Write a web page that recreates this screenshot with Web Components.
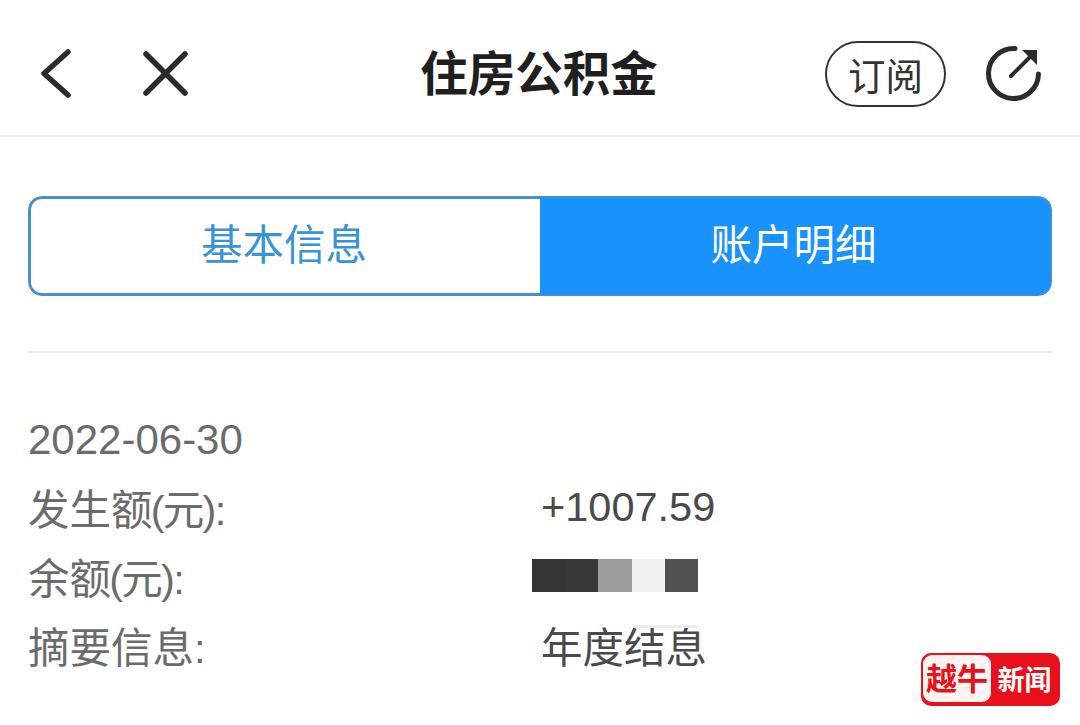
<!DOCTYPE html>
<html lang="zh">
<head>
<meta charset="utf-8">
<title>住房公积金</title>
<style>
  html, body { margin: 0; background: #fff; }
  body { width: 1080px; height: 725px; overflow: hidden; font-family: "Liberation Sans", "Noto Sans CJK SC", sans-serif; }
</style>
</head>
<body>
<app-header title="住房公积金"></app-header>
<tab-switch></tab-switch>
<detail-list>
  <div slot="date">2022-06-30</div>
  <detail-row label="发生额(元):">+1007.59</detail-row>
  <detail-row label="余额(元):"><mosaic-block></mosaic-block></detail-row>
  <detail-row label="摘要信息:" smudge>年度结息</detail-row>
</detail-list>
<news-badge></news-badge>

<script>
class AppHeader extends HTMLElement {
  constructor() {
    super();
    this.root = this.attachShadow({ mode: "open" });
    this.root.innerHTML = `
      <style>
        :host { display: block; height: 135px; border-bottom: 2px solid #f1f1f1; }
        .bar { display: grid; grid-template-columns: 1fr auto 1fr; align-items: center; height: 100%; padding: 12px 37px 0 40px; box-sizing: border-box; }
        .left, .right { display: flex; align-items: center; }
        .right { justify-content: flex-end; gap: 39px; }
        .left { gap: 69px; }
        h1 { margin: 2px 5px 0 0; font-size: 47.500px; font-weight: 700; color: #1f1f1f; line-height: 1; white-space: nowrap; }
        .pill { width: 121px; height: 66px; box-sizing: border-box; border: 2.500px solid #333; border-radius: 33px; font-size: 37.500px; color: #333; display: flex; align-items: center; justify-content: center; }
        svg { display: block; }
      </style>
      <div class="bar">
        <div class="left">
          <svg width="34" height="50" viewBox="0 0 34 50"><path d="M28 3 L4 24.500 L28 46" fill="none" stroke="#2b2b2d" stroke-width="5.500" stroke-linecap="round" stroke-linejoin="round"/></svg>
          <svg width="45" height="45" viewBox="0 0 45 45"><path d="M3 3 L42 42 M42 3 L3 42" fill="none" stroke="#2b2b2d" stroke-width="5.500" stroke-linecap="round"/></svg>
        </div>
        <h1>${this.getAttribute("title")}</h1>
        <div class="right">
          <div class="pill">订阅</div>
          <svg width="58" height="58" viewBox="0 0 58 58" fill="none" stroke="#2b2b2d"><path d="M30 3.500 A25 25 0 1 0 53.500 29" stroke-width="5" stroke-linecap="round"/><path d="M26 31 L47 10" stroke-width="4" stroke-linecap="round"/><path d="M37 5 H52 V20 Z" fill="#2b2b2d" stroke="none"/></svg>
        </div>
      </div>`;
  }
}

class TabSwitch extends HTMLElement {
  constructor() {
    super();
    this.root = this.attachShadow({ mode: "open" });
    this.root.innerHTML = `
      <style>
        :host { display: block; margin: 59px 28px 0; height: 100px; }
        .tabs { display: grid; grid-template-columns: 1fr 1fr; height: 100%; border-radius: 14px; overflow: hidden; }
        .tab { display: flex; align-items: center; justify-content: center; font-size: 41.500px; padding: 0 3px 8px 0; box-sizing: border-box; }
        .plain { color: #3a93d4; border: 3px solid #4a90c6; border-right: 0; border-radius: 14px 0 0 14px; }
        .active { background: #1a92fb; color: #fff; border: solid #3a90d6; border-width: 2px 2px 2px 0; border-radius: 0 14px 14px 0; }
      </style>
      <div class="tabs">
        <div class="tab plain">基本信息</div>
        <div class="tab active">账户明细</div>
      </div>`;
  }
}

class DetailList extends HTMLElement {
  constructor() {
    super();
    this.root = this.attachShadow({ mode: "open" });
    this.root.innerHTML = `
      <style>
        :host { display: block; margin: 55px 28px 0; border-top: 2px solid #ededed; padding-top: 52px; color: #6b6b6b; }
        ::slotted([slot="date"]) { font-size: 42px; line-height: 69px; height: 67px; }
      </style>
      <slot name="date"></slot>
      <slot></slot>`;
  }
}

class DetailRow extends HTMLElement {
  constructor() {
    super();
    this.root = this.attachShadow({ mode: "open" });
    const smudge = this.hasAttribute("smudge") ? `<span class="smudge"></span>` : "";
    const label = this.getAttribute("label").replace(/[()]/g, (p) => `<span class="paren">${p}</span>`);
    this.root.innerHTML = `
      <style>
        :host { display: grid; grid-template-columns: 513px 1fr; height: 69.200px; align-items: center; font-size: 41.500px; }
        .value { color: #4a4a4a; display: flex; position: relative; }
        .paren { margin: 0 -1.750px; }
        .smudge { position: absolute; left: 92px; top: 10px; width: 65px; height: 3px; background: #ebebeb; }
      </style>
      <div class="label">${label}</div>
      <div class="value"><slot></slot>${smudge}</div>`;
  }
}

class MosaicBlock extends HTMLElement {
  constructor() {
    super();
    this.root = this.attachShadow({ mode: "open" });
    this.root.innerHTML = `
      <style>
        :host { display: flex; height: 33px; margin-left: -9px; }
        i { display: block; width: 33.200px; }
      </style>
      <i style="background:#353535"></i><i style="background:#383838"></i><i style="background:#9d9d9d"></i><i style="background:#f0f0f0"></i><i style="background:#505050"></i>`;
  }
}

class NewsBadge extends HTMLElement {
  constructor() {
    super();
    this.root = this.attachShadow({ mode: "open" });
    this.root.innerHTML = `
      <style>
        :host { position: absolute; left: 921px; top: 653px; width: 139px; height: 53px; display: flex; box-sizing: border-box; background: #e8101a; border-radius: 10px; padding: 2px 2px 4px 2px; }
        .mark { width: 68px; background: #fdf3f0; border-radius: 9px; color: #e3141a; font: 700 31px/43px "Noto Sans CJK SC", serif; text-align: center; white-space: nowrap; }
        .name { flex: 1; color: #fff; font: 700 27px/47px "Noto Sans CJK SC", sans-serif; text-align: center; white-space: nowrap; }
      </style>
      <div class="mark">越牛</div>
      <div class="name">新闻</div>`;
  }
}

customElements.define("app-header", AppHeader);
customElements.define("tab-switch", TabSwitch);
customElements.define("detail-list", DetailList);
customElements.define("detail-row", DetailRow);
customElements.define("mosaic-block", MosaicBlock);
customElements.define("news-badge", NewsBadge);
</script>
</body>
</html>
